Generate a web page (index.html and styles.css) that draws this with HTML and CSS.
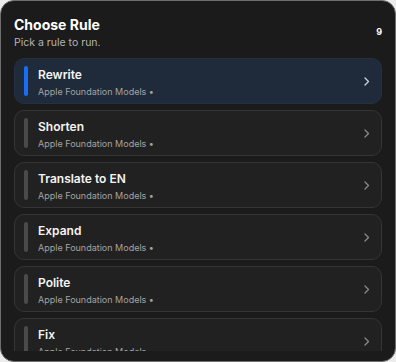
FILE: index.html
```html
<!DOCTYPE html>
<html lang="en">
<head>
    <meta charset="UTF-8">
    <meta name="viewport" content="width=device-width, initial-scale=1.0">
    <title>Choose Rule</title>
    <link rel="stylesheet" href="styles.css">
</head>
<body>
    <div class="panel">
        <div class="header">
            <div>
                <h1>Choose Rule</h1>
                <p class="hint">Pick a rule to run.</p>
            </div>
            <span class="count">9</span>
        </div>
        <div class="list">
            <div class="rule active">
                <span class="bar"></span>
                <div class="info">
                    <div class="name">Rewrite</div>
                    <div class="model">Apple Foundation Models •</div>
                </div>
                <svg class="chevron" width="6" height="9" viewBox="0 0 6 9"><path d="M1 1l3.5 3.5L1 8" fill="none" stroke="currentColor" stroke-width="1.3" stroke-linecap="round" stroke-linejoin="round"/></svg>
            </div>
            <div class="rule">
                <span class="bar"></span>
                <div class="info">
                    <div class="name">Shorten</div>
                    <div class="model">Apple Foundation Models •</div>
                </div>
                <svg class="chevron" width="6" height="9" viewBox="0 0 6 9"><path d="M1 1l3.5 3.5L1 8" fill="none" stroke="currentColor" stroke-width="1.3" stroke-linecap="round" stroke-linejoin="round"/></svg>
            </div>
            <div class="rule">
                <span class="bar"></span>
                <div class="info">
                    <div class="name">Translate to EN</div>
                    <div class="model">Apple Foundation Models •</div>
                </div>
                <svg class="chevron" width="6" height="9" viewBox="0 0 6 9"><path d="M1 1l3.5 3.5L1 8" fill="none" stroke="currentColor" stroke-width="1.3" stroke-linecap="round" stroke-linejoin="round"/></svg>
            </div>
            <div class="rule">
                <span class="bar"></span>
                <div class="info">
                    <div class="name">Expand</div>
                    <div class="model">Apple Foundation Models •</div>
                </div>
                <svg class="chevron" width="6" height="9" viewBox="0 0 6 9"><path d="M1 1l3.5 3.5L1 8" fill="none" stroke="currentColor" stroke-width="1.3" stroke-linecap="round" stroke-linejoin="round"/></svg>
            </div>
            <div class="rule">
                <span class="bar"></span>
                <div class="info">
                    <div class="name">Polite</div>
                    <div class="model">Apple Foundation Models •</div>
                </div>
                <svg class="chevron" width="6" height="9" viewBox="0 0 6 9"><path d="M1 1l3.5 3.5L1 8" fill="none" stroke="currentColor" stroke-width="1.3" stroke-linecap="round" stroke-linejoin="round"/></svg>
            </div>
            <div class="rule">
                <span class="bar"></span>
                <div class="info">
                    <div class="name">Fix</div>
                    <div class="model">Apple Foundation Models •</div>
                </div>
                <svg class="chevron" width="6" height="9" viewBox="0 0 6 9"><path d="M1 1l3.5 3.5L1 8" fill="none" stroke="currentColor" stroke-width="1.3" stroke-linecap="round" stroke-linejoin="round"/></svg>
            </div>
        </div>
    </div>
</body>
</html>
```

FILE: styles.css
```css
html, body {
    height: 100%;
}
body {
    font-family: Inter, "Noto Sans", sans-serif;
    margin: 0;
    padding: 0;
    background-color: #ececec;
}
.panel {
    box-sizing: border-box;
    height: 362px;
    display: flex;
    flex-direction: column;
    background: #1b1b1c;
    border: 1px solid #6e6e6e;
    border-radius: 14px;
    padding: 15px 13px 10px 13px;
    overflow: hidden;
}
.header {
    display: flex;
    justify-content: space-between;
    align-items: center;
    margin-bottom: 9px;
}
h1 {
    margin: 0;
    font-size: 14px;
    line-height: 17px;
    font-weight: 700;
    color: #fff;
}
.hint {
    margin: 3px 0 0;
    font-size: 10.5px;
    line-height: 13px;
    color: #b4b4b4;
}
.count {
    font-size: 9px;
    font-weight: 700;
    color: #fff;
    margin-bottom: 3px;
}
.list {
    flex: 1;
    display: flex;
    flex-direction: column;
    gap: 6px;
    overflow: hidden;
}
.rule {
    box-sizing: border-box;
    flex: none;
    height: 46px;
    display: flex;
    align-items: center;
    padding: 0 11px 0 9px;
    background: #212122;
    border: 1px solid #353536;
    border-radius: 10px;
}
.rule.active {
    background: #1f2a3b;
    border-color: #243044;
}
.bar {
    width: 4px;
    height: 30px;
    border-radius: 2px;
    background: #4a4a4b;
    margin-right: 10px;
}
.active .bar {
    background: #1a6ef5;
}
.info {
    flex: 1;
    padding-top: 2px;
}
.name {
    font-size: 12px;
    line-height: 15px;
    font-weight: 600;
    color: #f4f4f4;
}
.model {
    margin-top: 4px;
    font-size: 9px;
    line-height: 12px;
    color: #a4a4a4;
}
.chevron {
    color: #8a8a8a;
}
.active .chevron {
    color: #cfd3da;
}
```
